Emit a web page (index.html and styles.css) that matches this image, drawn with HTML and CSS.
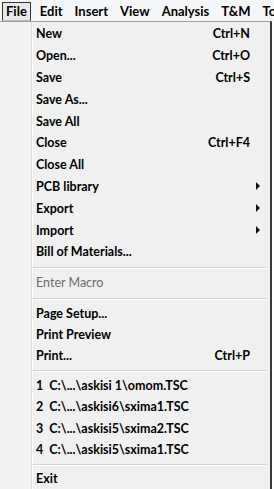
FILE: index.html
```html
<!DOCTYPE html>
<html lang="en">
<head>
  <meta charset="UTF-8" />
  <title>File menu</title>
  <link rel="stylesheet" href="styles.css">
</head>
<body>

  <!-- menu bar -->
  <div class="menubar">
    <span class="top open">File</span>
    <span class="top">Edit</span>
    <span class="top">Insert</span>
    <span class="top">View</span>
    <span class="top">Analysis</span>
    <span class="top">T&amp;M</span>
    <span class="top">Tools</span>
  </div>

  <!-- File dropdown -->
  <div class="dropdown">
    <div class="item"><span>New</span><span class="key">Ctrl+N</span></div>
    <div class="item"><span>Open...</span><span class="key">Ctrl+O</span></div>
    <div class="item"><span>Save</span><span class="key">Ctrl+S</span></div>
    <div class="item"><span>Save As...</span></div>
    <div class="item"><span>Save All</span></div>
    <div class="item"><span>Close</span><span class="key">Ctrl+F4</span></div>
    <div class="item"><span>Close All</span></div>
    <div class="item sub"><span>PCB library</span><span class="arrow"></span></div>
    <div class="item sub"><span>Export</span><span class="arrow"></span></div>
    <div class="item sub"><span>Import</span><span class="arrow"></span></div>
    <div class="item"><span>Bill of Materials...</span></div>
    <div class="sep"></div>
    <div class="item disabled"><span>Enter Macro</span></div>
    <div class="sep"></div>
    <div class="item short"><span>Page Setup...</span></div>
    <div class="item short"><span>Print Preview</span></div>
    <div class="item short"><span>Print...</span><span class="key">Ctrl+P</span></div>
    <div class="sep"></div>
    <div class="item recent"><span>1&nbsp; C:\...\askisi 1\omom.TSC</span></div>
    <div class="item recent"><span>2&nbsp; C:\...\askisi6\sxima1.TSC</span></div>
    <div class="item recent"><span>3&nbsp; C:\...\askisi5\sxima2.TSC</span></div>
    <div class="item recent"><span>4&nbsp; C:\...\askisi5\sxima1.TSC</span></div>
    <div class="sep last"></div>
    <div class="item"><span>Exit</span></div>
  </div>

</body>
</html>
```

FILE: styles.css
```css
/*── page ──*/
body {
  margin: 0;
  background: #fff;
  font-family: Lato, "Open Sans", sans-serif;
  color: #000;
  overflow: hidden;
}
/*── menu bar ──*/
.menubar {
  display: flex;
  height: 21px;
  align-items: center;
  background: #f5f6f7;
  white-space: nowrap;
  overflow: hidden;
  font-size: 13px;
  font-weight: 700;
  padding-left: 2px;
  gap: 12px;
}
.top {
  flex-shrink: 0;
}
.top.open {
  border: 1px solid #333;
  border-bottom-color: #bbb;
  padding: 0 3px;
  margin-right: -3px;
  line-height: 17px;
  margin-top: 1px;
  background: #e8e8e8;
}
/*── dropdown ──*/
.dropdown {
  width: 272px;
  height: 470px;
  border-top: 1px solid #a0a0a0;
  border-right: 2px solid #3a3a3a;
  background: linear-gradient(to right, #f2f2f2 0 31px, #dcdcdc 31px 32px, #fff 32px 33px, #f0f0f0 33px);
  font-size: 12.5px;
  font-weight: 700;
  box-sizing: border-box;
  padding-top: 1px;
  padding-right: 4px;
}
.item {
  display: flex;
  align-items: center;
  height: 21.8px;
  padding-left: 36px;
  padding-right: 16px;
  white-space: nowrap;
}
.item.short {
  height: 21px;
}
.item.recent {
  height: 21.5px;
}
.key {
  margin-left: auto;
}
.arrow {
  margin-left: auto;
  margin-right: -10px;
  width: 0;
  height: 0;
  border-top: 4px solid transparent;
  border-bottom: 4px solid transparent;
  border-left: 4px solid #111;
}
.disabled {
  color: #6d6d6d;
  font-weight: 400;
}
.sep {
  margin: 4px 0 3px 33px;
  height: 1px;
  background: #d2d2d2;
  border-bottom: 1px solid #fff;
}
.sep.last {
  margin: 3px 0 2px 33px;
}
```
